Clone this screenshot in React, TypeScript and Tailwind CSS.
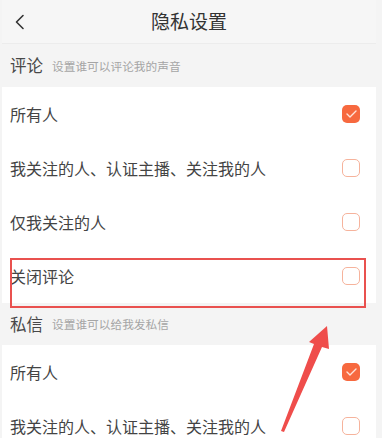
import React from "react";

const Box = ({ checked }: { checked?: boolean }) =>
  checked ? (
    <span className="w-[18px] h-[18px] rounded-[5px] bg-[#f7693f] flex items-center justify-center">
      <svg width="11" height="8" viewBox="0 0 11 8" fill="none">
        <path d="M1 4l3 3 6-6" stroke="#ffe3d8" strokeWidth="1.4" strokeLinecap="round" strokeLinejoin="round" />
      </svg>
    </span>
  ) : (
    <span className="w-[18px] h-[18px] rounded-[5px] border-[1.5px] border-[#f6b39c] bg-white" />
  );

const Row = ({ label, checked }: { label: string; checked?: boolean }) => (
  <div className="h-[54px] bg-white flex items-center justify-between pl-[8px] pr-[16px]">
    <span className="text-[16px] text-[#444]">{label}</span>
    <Box checked={checked} />
  </div>
);

const Section = ({ title, sub }: { title: string; sub: string }) => (
  <div className="flex items-center gap-[9px] pl-[8px]">
    <span className="text-[16.5px] text-[#484848]">{title}</span>
    <span className="text-[11.7px] text-[#a5a5a5]">{sub}</span>
  </div>
);

export default function App() {
  return (
    <div
      className="relative w-[382px] h-[438px] overflow-hidden bg-[#f4f4f4]"
      style={{ fontFamily: '"Noto Sans CJK SC", "Noto Sans", sans-serif' }}
    >
      <div className="pl-[2px] pr-[6px]">
        <div className="h-[44px] grid grid-cols-[1fr_auto_1fr] items-center bg-[#f6f6f6] border-b border-[#ececec]">
          <svg className="ml-[12px]" width="12" height="16" viewBox="0 0 12 16" fill="none">
            <path d="M9 1.5L2.5 8 9 14.5" stroke="#333" strokeWidth="1.6" strokeLinecap="round" strokeLinejoin="round" />
          </svg>
          <span className="text-[19px] text-[#333]">隐私设置</span>
          <span />
        </div>
        <div className="h-[43px] flex items-center">
          <Section title="评论" sub="设置谁可以评论我的声音" />
        </div>
        <Row label="所有人" checked />
        <Row label="我关注的人、认证主播、关注我的人" />
        <Row label="仅我关注的人" />
        <Row label="关闭评论" />
        <div className="h-[42px] flex items-center">
          <Section title="私信" sub="设置谁可以给我发私信" />
        </div>
        <Row label="所有人" checked />
        <Row label="我关注的人、认证主播、关注我的人" />
      </div>

      {/* annotation box */}
      <div className="absolute left-[10px] top-[258px] w-[356px] h-[50px] border-2 border-[#e9514f]" />
      {/* annotation arrow */}
      <svg className="absolute left-0 top-0" width="382" height="438" viewBox="0 0 382 438">
        <polygon points="281,431 314,344 309,342 327,326 329,349 322,347 284,432" fill="#ef4d4b" />
      </svg>
    </div>
  );
}
